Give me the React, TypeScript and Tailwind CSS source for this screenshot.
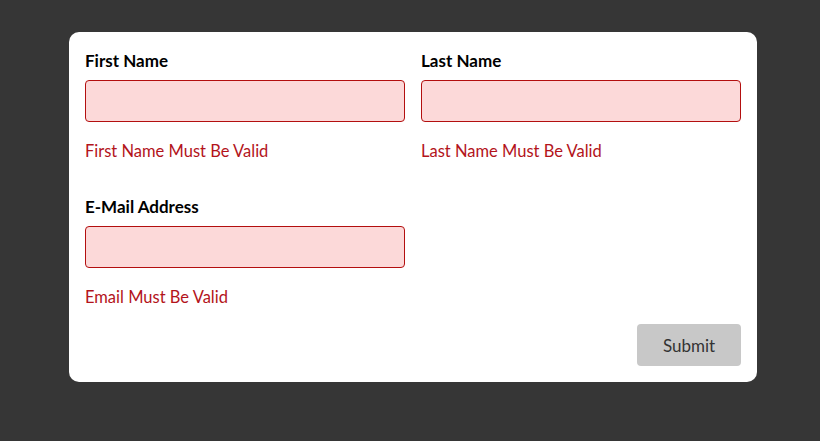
import React from 'react';

interface FieldProps {
  label: string;
  error: string;
}

function Field({ label, error }: FieldProps) {
  return (
    <div className="flex flex-col">
      <label className="mt-px text-[17px] leading-6 font-bold text-black">{label}</label>
      <input
        type="text"
        className="mt-[7px] h-[42px] w-full rounded-[4px] border border-[#b30f0f] bg-[#fcd9d9] px-3 outline-none"
      />
      <span className="mt-[17px] text-[16.5px] leading-6 text-[#b3141b]">{error}</span>
    </div>
  );
}

export default function App() {
  return (
    <div
      className="min-h-[441px] bg-[#363636] pt-8"
      style={{ fontFamily: 'Lato, "Liberation Sans", sans-serif' }}
    >
      <form className="ml-[69px] w-[688px] rounded-[10px] bg-white p-4">
        <div className="grid grid-cols-2 gap-x-4 gap-y-[31px]">
          <Field label="First Name" error="First Name Must Be Valid" />
          <Field label="Last Name" error="Last Name Must Be Valid" />
          <Field label="E-Mail Address" error="Email Must Be Valid" />
        </div>
        <div className="mt-[15px] flex justify-end">
          <button
            type="button"
            className="h-[42px] w-[104px] rounded-[4px] bg-[#c8c8c8] pt-px text-[17px] text-[#333]"
          >
            Submit
          </button>
        </div>
      </form>
    </div>
  );
}
